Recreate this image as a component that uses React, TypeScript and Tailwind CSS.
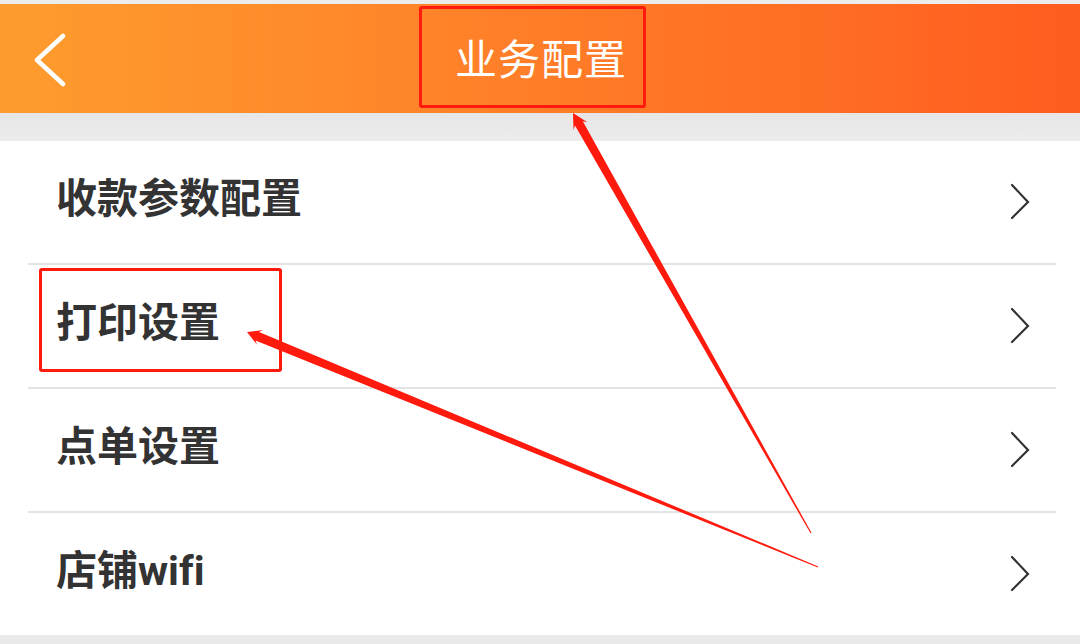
const rows = ["收款参数配置", "打印设置", "点单设置", "店铺wifi"];

function BackIcon() {
  return (
    <svg width="44" height="56" viewBox="0 0 44 56" fill="none">
      <path d="M35 5 L9 29 L35 53" stroke="#fff" strokeWidth="4.5" strokeLinecap="round" strokeLinejoin="round" />
    </svg>
  );
}

function Chevron() {
  return (
    <svg width="22" height="40" viewBox="0 0 22 40" fill="none">
      <path d="M3 3 L19 20 L3 36" stroke="#333" strokeWidth="2.2" strokeLinecap="round" strokeLinejoin="miter" />
    </svg>
  );
}

// red annotation marks drawn over the screenshot
function Annotations() {
  return (
    <svg className="absolute inset-0 pointer-events-none" width="1080" height="644" viewBox="0 0 1080 644">
      <polygon
        points="247,332 263,330 259,332 818.2,566.4 817.8,567.6 255.5,340.4 257,344.7"
        fill="#ff1a0e"
      />
      <polygon
        points="573,113 587.4,122.2 582.8,121.2 811.5,532.7 810.5,533.3 575,125.6 573.5,130"
        fill="#ff1a0e"
      />
    </svg>
  );
}

export default function App() {
  return (
    <div
      className="relative w-[1080px] h-[644px] overflow-hidden bg-[#e9e9e9]"
      style={{ fontFamily: '"Noto Sans CJK SC", "Noto Sans", sans-serif' }}
    >
      <div className="h-[4px] bg-[#ececec]" />
      <header className="h-[109px] flex items-center relative bg-gradient-to-r from-[#fd9c2e] via-[#ff7d28] to-[#ff5c1f]">
        <div className="pl-[28px] flex items-center">
          <BackIcon />
        </div>
        <h1 className="absolute left-0 right-0 text-center text-white text-[42px] leading-none font-normal tracking-[1px] pl-[2px] mb-[3px]">
          业务配置
        </h1>
      </header>
      <div className="h-[28px] bg-gradient-to-b from-[#e6e6e6] to-[#ececec]" />

      <main className="bg-white">
        {rows.map((label, i) => (
          <div key={label}>
            {i > 0 && <div className="h-[2px] ml-[28px] mr-[24px] bg-[#e4e4e4]" />}
            <div className="flex items-center justify-between pl-[56px] pr-[49px] h-[122px]">
              <span
                className="text-[41px] font-bold text-[#333333] leading-none mb-[6px] [font-variant-ligatures:none]"
                style={{ fontFamily: '"Roboto", "Noto Sans CJK SC", sans-serif' }}
              >
                {label}
              </span>
              <Chevron />
            </div>
          </div>
        ))}
      </main>

      {/* annotation boxes */}
      <div className="absolute left-[419px] top-[6px] w-[227px] h-[102px] border-[3px] border-[#ff1a0e] rounded-[3px]" />
      <div className="absolute left-[39px] top-[268px] w-[243px] h-[104px] border-[3px] border-[#ff1a0e] rounded-[3px]" />
      <Annotations />
    </div>
  );
}
